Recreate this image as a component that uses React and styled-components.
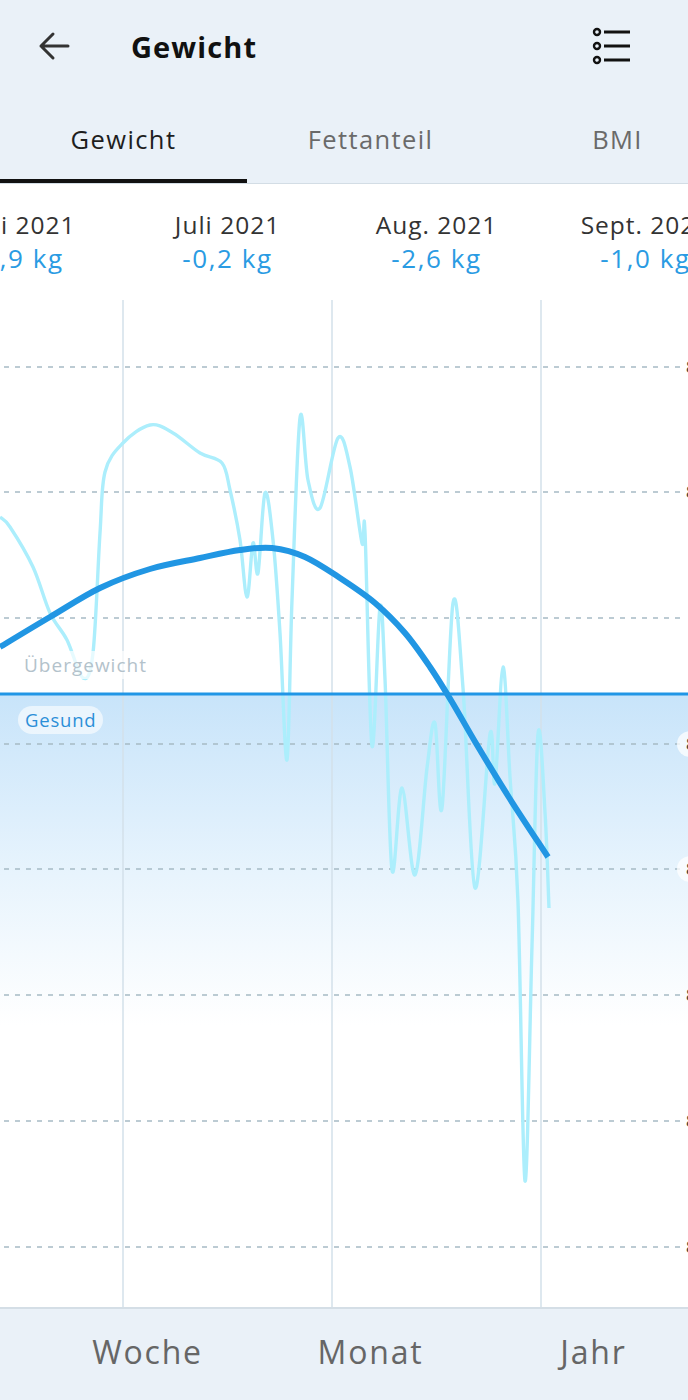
import React from "react"
import styled, { createGlobalStyle } from "styled-components"

const GlobalStyle = createGlobalStyle`
  html, body {
    margin: 0;
    padding: 0;
    background: #ffffff;
  }

  body {
    font-family: "Open Sans", "Noto Sans", sans-serif;
    -webkit-font-smoothing: antialiased;
  }
`

const Screen = styled.div`
  width: 688px;
  height: 1400px;
  display: flex;
  flex-direction: column;
  overflow: hidden;
  background: #ffffff;
`

const TopBar = styled.header`
  height: 92px;
  flex-shrink: 0;
  display: flex;
  align-items: center;
  padding: 0 56px 0 34px;
  background: #eaf1f8;
`

const IconButton = styled.button`
  width: 40px;
  height: 40px;
  padding: 0;
  border: 0;
  background: none;
  display: flex;
  align-items: center;
  justify-content: center;
`

const Title = styled.h1`
  flex: 1;
  margin: 0 0 0 57px;
  font-size: 29px;
  font-weight: 700;
  color: #111111;
  letter-spacing: 1.1px;
`

const Tabs = styled.nav`
  height: 92px;
  flex-shrink: 0;
  display: flex;
  overflow: hidden;
  background: #eaf1f8;
  border-bottom: 1px solid #d3dde5;
  box-sizing: border-box;
`

const Tab = styled.div`
  width: 247px;
  flex-shrink: 0;
  display: flex;
  align-items: center;
  justify-content: center;
  padding-top: 6px;
  font-size: 25.5px;
  letter-spacing: 1.4px;
  color: ${(p) => (p.$active ? "#1e1e1e" : "#6a6a6a")};
  border-bottom: 4px solid ${(p) => (p.$active ? "#111111" : "transparent")};
`

const Months = styled.div`
  height: 116px;
  flex-shrink: 0;
  display: flex;
  margin-left: -86px;
`

const Month = styled.div`
  width: 209px;
  flex-shrink: 0;
  display: flex;
  flex-direction: column;
  align-items: center;
  padding-top: 25px;
  white-space: nowrap;
`

const MonthName = styled.div`
  font-size: 24.5px;
  line-height: 32px;
  color: #333333;
  letter-spacing: 1px;
`

const MonthDelta = styled.div`
  font-size: 26px;
  line-height: 34px;
  color: #2a9be3;
  letter-spacing: 1.6px;
`

const ChartArea = styled.div`
  position: relative;
  height: 1007px;
  flex-shrink: 0;
  overflow: hidden;
`

const ChartSvg = styled.svg`
  display: block;
  width: 688px;
  height: 1007px;
`

const ZoneLabel = styled.span`
  position: absolute;
  left: ${(p) => p.$left}px;
  top: ${(p) => p.$top}px;
  height: 28px;
  line-height: 28px;
  padding: 0 ${(p) => (p.$pill ? "7px" : "0")};
  border-radius: 14px;
  font-size: ${(p) => (p.$pill ? "18.5px" : "19px")};
  letter-spacing: ${(p) => (p.$pill ? "0.8px" : "1px")};
  color: ${(p) => (p.$pill ? "#2b8fd8" : "#b3c2cb")};
  background: ${(p) => (p.$pill ? "rgba(255,255,255,0.6)" : "rgba(255,255,255,0.7)")};
`

const AxisTick = styled.span`
  position: absolute;
  left: 677px;
  width: 40px;
  height: 26px;
  margin-top: -13px;
  border-radius: 13px;
  padding-left: 9px;
  box-sizing: border-box;
  line-height: 26px;
  font-size: 17px;
  font-weight: 600;
  color: #444444;
  background: ${(p) => (p.$onZone ? "rgba(255,255,255,0.75)" : "transparent")};
`

const BottomBar = styled.footer`
  flex: 1;
  display: grid;
  grid-template-columns: repeat(3, 223px);
  padding-left: 36px;
  align-items: center;
  background: #eaf1f8;
  border-top: 2px solid #d4dee6;
`

const Period = styled.div`
  text-align: center;
  font-size: 32px;
  letter-spacing: 1.8px;
  color: #666666;
  padding-bottom: 6px;
`

const months = [
  { name: "Juni 2021", delta: "-0,9 kg" },
  { name: "Juli 2021", delta: "-0,2 kg" },
  { name: "Aug. 2021", delta: "-2,6 kg" },
  { name: "Sept. 2021", delta: "-1,0 kg" },
]

const gridY = [367, 492, 618, 744, 869, 995, 1121, 1247]
const monthLines = [123, 332, 541]

const dailyPoints = [
  [0, 517], [10, 527], [33, 567], [50, 613], [67, 640], [83, 678], [93, 653],
  [100, 533], [105, 472], [123, 443], [150, 425], [173, 433], [200, 453],
  [222, 463], [230, 490], [240, 540], [247, 597], [253, 543], [258, 573],
  [265, 493], [273, 540], [280, 633], [287, 760], [292, 600], [300, 418],
  [308, 480], [320, 508], [338, 438], [350, 467], [362, 543], [365, 532],
  [372, 746], [380, 607], [385, 679], [392, 870], [402, 788], [415, 875],
  [427, 768], [435, 723], [442, 808], [453, 603], [463, 688], [475, 888],
  [490, 734], [495, 783], [503, 667], [510, 777], [518, 902], [525, 1181],
  [532, 946], [538, 734], [545, 812], [549, 908],
]

const trendPoints = [
  [0, 647], [50, 617], [100, 588], [150, 569], [200, 558], [240, 550],
  [272, 548], [305, 557], [340, 578], [375, 603], [405, 633], [430, 667],
  [452, 702], [477, 745], [510, 799], [548, 857],
]

// catmull-rom -> cubic bezier
const smoothPath = (pts) => {
  let d = `M${pts[0][0]},${pts[0][1]}`
  for (let i = 0; i < pts.length - 1; i++) {
    const p0 = pts[i - 1] || pts[i]
    const p1 = pts[i]
    const p2 = pts[i + 1]
    const p3 = pts[i + 2] || p2
    const c1x = p1[0] + (p2[0] - p0[0]) / 6
    const c1y = p1[1] + (p2[1] - p0[1]) / 6
    const c2x = p2[0] - (p3[0] - p1[0]) / 6
    const c2y = p2[1] - (p3[1] - p1[1]) / 6
    d += ` C${c1x.toFixed(1)},${c1y.toFixed(1)} ${c2x.toFixed(1)},${c2y.toFixed(1)} ${p2[0]},${p2[1]}`
  }
  return d
}

const BackArrow = () => (
  <svg width="34" height="34" viewBox="0 0 34 34" fill="none">
    <path d="M31 17H4M16 5L4 17l12 12" stroke="#333" strokeWidth="3" strokeLinecap="round" strokeLinejoin="round" />
  </svg>
)

const ListIcon = () => (
  <svg width="40" height="40" viewBox="0 0 40 40" fill="none">
    {[6, 20, 34].map((y) => (
      <g key={y}>
        <circle cx="5" cy={y} r="3" stroke="#111" strokeWidth="2.4" />
        <path d={`M12 ${y}H38`} stroke="#111" strokeWidth="3" />
      </g>
    ))}
  </svg>
)

const WeightChart = () => (
  <ChartSvg viewBox="0 300 688 1007">
    <defs>
      <linearGradient id="healthy" x1="0" y1="0" x2="0" y2="1">
        <stop offset="0" stopColor="#c8e4fa" />
        <stop offset="0.55" stopColor="#e8f4fd" />
        <stop offset="1" stopColor="#ffffff" />
      </linearGradient>
    </defs>
    <rect x="0" y="695" width="688" height="330" fill="url(#healthy)" />
    {monthLines.map((x) => (
      <line key={x} x1={x} y1="300" x2={x} y2="1307" stroke="#d3e0ea" strokeWidth="1.5" />
    ))}
    {gridY.map((y) => (
      <line
        key={y}
        x1="4"
        y1={y}
        x2="680"
        y2={y}
        stroke="#a6bac5"
        strokeWidth="1.6"
        strokeDasharray="5 6"
      />
    ))}
    <path d={smoothPath(dailyPoints)} fill="none" stroke="#aceefc" strokeWidth="3.4" strokeLinejoin="round" />
    <line x1="0" y1="694" x2="688" y2="694" stroke="#2196e6" strokeWidth="3" />
    <path d={smoothPath(trendPoints)} fill="none" stroke="#2196e3" strokeWidth="6" />
  </ChartSvg>
)

const App = () => (
  <Screen>
    <GlobalStyle />
    <TopBar>
      <IconButton aria-label="Zurück">
        <BackArrow />
      </IconButton>
      <Title>Gewicht</Title>
      <IconButton aria-label="Liste">
        <ListIcon />
      </IconButton>
    </TopBar>

    <Tabs>
      <Tab $active>Gewicht</Tab>
      <Tab>Fettanteil</Tab>
      <Tab>BMI</Tab>
    </Tabs>

    <Months>
      {months.map((m) => (
        <Month key={m.name}>
          <MonthName>{m.name}</MonthName>
          <MonthDelta>{m.delta}</MonthDelta>
        </Month>
      ))}
    </Months>

    <ChartArea>
      <WeightChart />
      <ZoneLabel $left={24} $top={351}>Übergewicht</ZoneLabel>
      <ZoneLabel $pill $left={18} $top={406}>Gesund</ZoneLabel>
      {gridY
        .filter((y) => y !== 618)
        .map((y) => (
          <AxisTick key={y} $onZone={y > 694 && y < 900} style={{ top: y - 300 }}>
            8
          </AxisTick>
        ))}
    </ChartArea>

    <BottomBar>
      <Period>Woche</Period>
      <Period>Monat</Period>
      <Period>Jahr</Period>
    </BottomBar>
  </Screen>
)

export default App
